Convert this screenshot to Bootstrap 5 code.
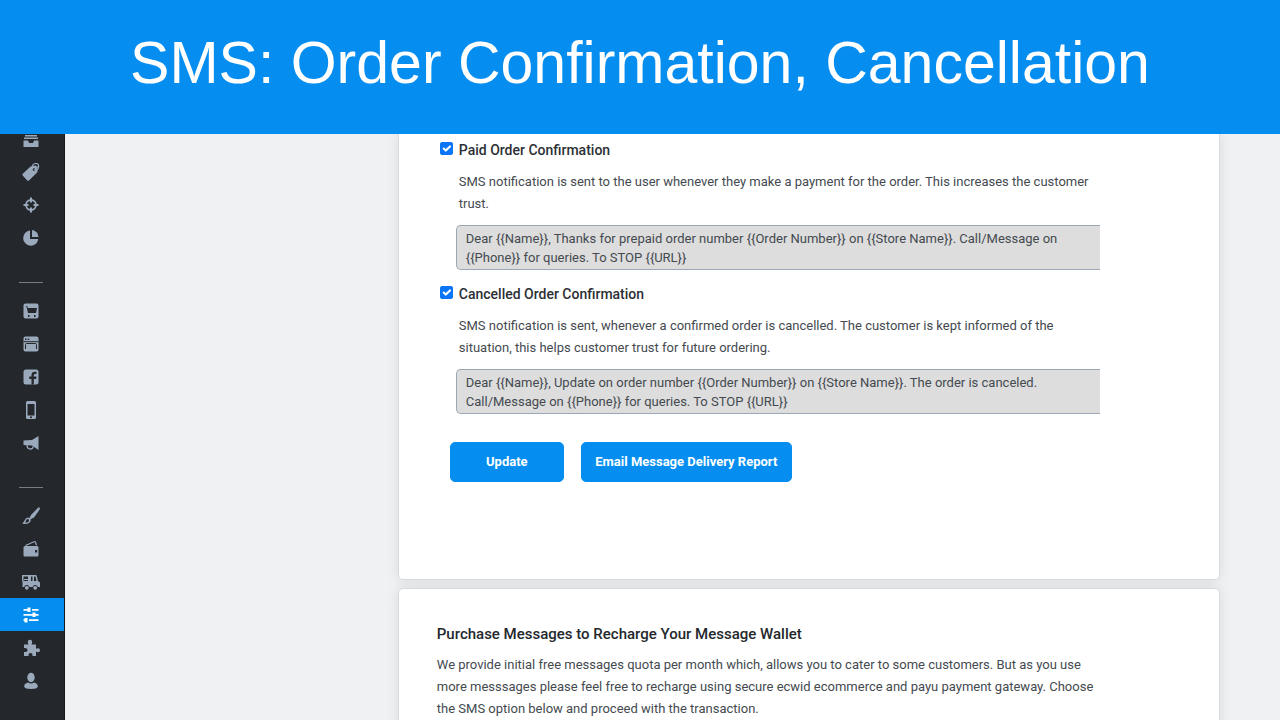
<!DOCTYPE html>
<html lang="en">
<head>
<meta charset="utf-8">
<meta name="viewport" content="width=device-width, initial-scale=1">
<title>SMS: Order Confirmation, Cancellation</title>
<link href="https://cdn.jsdelivr.net/npm/bootstrap@5.3.0/dist/css/bootstrap.min.css" rel="stylesheet">
<style>
  :root { --brand: #058ef0; }
  body { font-family: Roboto, "Open Sans", sans-serif; font-size: 13px; line-height: 22px; color: #444a50; background: #f0f1f3; }
  .banner { background: var(--brand); height: 134px; padding-bottom: 8px; }
  .banner h1 { font-family: "Liberation Sans", sans-serif; font-size: 59px; line-height: 64px; }
  .rail { width: 65px; background: #24282d; border-right: 1px solid #16191c; }
  .rail a { height: 33px; color: #9aa9bb; padding-right: 2px; }
  .rail a.cut { height: 21px; overflow: hidden; }
  .rail a.active { background: var(--brand); color: #fff; }
  .rail svg { width: 18px; height: 18px; fill: currentColor; flex: none; }
  .rail hr { width: 24px; margin: 28px 21px 11px 19px; border-top: 1px solid #8b9299; opacity: .8; }
  .content { padding: 0 60px 0 26%; }
  .panel { background: #fff; border: 1px solid #d9dcdf; border-radius: 5px; box-shadow: 0 0 14px rgba(0,0,0,.09); padding: 0 119px 40px 38px; }
  .panel-first { border-top: 0; border-radius: 0 0 5px 5px; padding-top: 5px; padding-bottom: 97px; margin-bottom: 8px; }
  .option { padding-left: 22px; }
  .option + .option { margin-top: 13px; }
  .option .form-check-input { width: 13px; height: 13px; margin: 3px 0 0 -19px; border-radius: 2px; }
  .option .form-check-input:checked { background-color: #0a75f5; border-color: #0a75f5; background-size: 14px; }
  .option label { font-size: 14px; font-weight: 500; color: #2b3035; display: block; }
  .option p { margin: 10px 0; }
  .sms { font: inherit; line-height: 19px; color: inherit; width: calc(100% + 3px); height: 45px; padding: 3px 9px; margin-left: -3px; background: #ddd; border: 1px solid #9aa8b5; border-right: 0; border-radius: 5px 0 0 5px; resize: none; overflow: hidden; display: block; outline: 0; }
  .actions { margin: 28px 0 0 13px; gap: 17px; }
  .action { --bs-btn-bg: var(--brand); --bs-btn-color: #fff; --bs-btn-hover-bg: #047fd6; --bs-btn-hover-color: #fff; --bs-btn-border-color: var(--brand); --bs-btn-border-radius: 5px; --bs-btn-font-size: 13px; --bs-btn-font-weight: 700; height: 40px; white-space: nowrap; }
  .update { width: 114px; }
  .report { width: 211px; }
  .panel h2 { font-size: 15px; line-height: 22px; font-weight: 500; color: #24282d; margin: 34px 0 9px; }
</style>
</head>
<body class="vh-100 d-flex flex-column overflow-hidden">
<header class="banner d-flex align-items-center justify-content-center flex-shrink-0">
  <h1 class="m-0 text-white fw-normal text-nowrap">SMS: Order Confirmation, Cancellation</h1>
</header>
<div class="d-flex flex-grow-1 overflow-hidden">
  <nav class="rail flex-shrink-0 d-flex flex-column" aria-label="Main">
    <a href="#" class="cut d-flex justify-content-center" aria-label="Orders"><svg viewBox="0 0 18 18"><path d="M3 1h12v1.500H3zM2 3.500h14V5H2zM1.500 6.500H6l1 2.500h4l1-2.500h4.500v6.500h-15z"/></svg></a>
    <a href="#" class="d-flex align-items-center justify-content-center" aria-label="Catalog"><svg viewBox="0 0 18 18"><path fill-rule="evenodd" d="M8.500 3.500 14 2.500 15.500 9 7 17.500Q6 18.300 5 17.300L.7 12.500Q0 11.500.8 10.700ZM12 5.200a1.400 1.400 0 1 0 .1 0z"/><path d="M10 6q0-5.500 4-5.500c4 0 3 5 .5 7.500M12 7q3.500-1 3-4" fill="none" stroke="currentColor" stroke-width="1.200"/></svg></a>
    <a href="#" class="d-flex align-items-center justify-content-center" aria-label="Marketing"><svg viewBox="0 0 18 18"><g fill="none" stroke="currentColor"><circle cx="9" cy="9" r="5" stroke-width="1.800"/><path d="M9 1.500v5M9 11.500v5M1.500 9h5M11.500 9h5" stroke-width="2"/></g></svg></a>
    <a href="#" class="d-flex align-items-center justify-content-center" aria-label="Reports"><svg viewBox="0 0 18 18"><path d="M8 1.500V10h8.300A7.600 7.600 0 1 1 8 1.500z"/><path d="M10 1a7.300 7.300 0 0 1 6.500 7H10z"/></svg></a>
    <hr>
    <a href="#" class="d-flex align-items-center justify-content-center" aria-label="Store"><svg viewBox="0 0 18 18"><rect x="1.500" y="1.500" width="15" height="15" rx="2"/><path d="M3 4h2l1 2h9l-1 5H6L4.500 4.500M6 13h1.500v2H6zM12 13h1.500v2H12z" fill="#24282d"/></svg></a>
    <a href="#" class="d-flex align-items-center justify-content-center" aria-label="Website"><svg viewBox="0 0 18 18"><rect x="1.500" y="1.500" width="15" height="15" rx="2"/><path d="M3 3.500h1.500V5H3zM5.700 3.500h1.500V5H5.700z" fill="#24282d"/><path d="M1.500 6.700h15M3.500 14V9.500Q3.500 8.500 4.500 8.500h9q1 0 1 1V14" fill="none" stroke="#24282d" stroke-width="1"/></svg></a>
    <a href="#" class="d-flex align-items-center justify-content-center" aria-label="Facebook"><svg viewBox="0 0 18 18"><rect x="1.500" y="1.500" width="15" height="15" rx="2.500"/><path d="M9.500 16.500V11H7.300V8.500h2.200V7q0-3.200 3.300-3.200h1.700v2.300H13q-1.200 0-1.200 1.200v1.200h2.700l-.4 2.500h-2.300v5.500z" fill="#24282d"/></svg></a>
    <a href="#" class="d-flex align-items-center justify-content-center" aria-label="Mobile"><svg viewBox="0 0 18 18"><path fill-rule="evenodd" d="M5.500 0h7Q14 0 14 1.500v15q0 1.500-1.500 1.500h-7Q4 18 4 16.500v-15Q4 0 5.500 0zM5.500 3v11.500h7V3zM8 15.500V17h2v-1.500z"/></svg></a>
    <a href="#" class="d-flex align-items-center justify-content-center" aria-label="Campaigns"><svg viewBox="0 0 18 18"><path d="M1.500 6.500 10 6l6.500-4v14L10 11.500l-8.500-.5z"/><path d="M5 11q0 4 3.500 4Q11 15 11 12.500" fill="none" stroke="currentColor" stroke-width="1.300"/></svg></a>
    <hr>
    <a href="#" class="d-flex align-items-center justify-content-center" aria-label="Design"><svg viewBox="0 0 18 18"><path d="M17.700.7q.5 1-.2 2L12 10.500 8 12.500l-.8-.7L9 8l7-7.200q1-.8 1.700-.1z"/><path fill-rule="evenodd" d="M6 10.500Q9 11 8.700 13.500 8 17.500.8 16.800q-.8-.5 0-1.100Q2.200 15 2.800 13 3.800 10.500 6 10.500zM5.500 12Q4 12.300 3.800 14.500L3 15.700q3.500 0 4.200-2.200.2-1.500-1.700-1.500z"/></svg></a>
    <a href="#" class="d-flex align-items-center justify-content-center" aria-label="Payment"><svg viewBox="0 0 18 18"><path fill-rule="evenodd" d="M3 6h12q1.500 0 1.500 1.500V15q0 1.500-1.500 1.500H3Q1.500 16.500 1.500 15V7.500Q1.500 6 3 6zm10 4v2.500h2.200V10z"/><path d="M3.500 5.500 12 1.800q1-.5 1.500.5l1 3" fill="none" stroke="currentColor" stroke-width="1.200"/></svg></a>
    <a href="#" class="d-flex align-items-center justify-content-center" aria-label="Shipping"><svg viewBox="0 0 18 18"><path fill-rule="evenodd" d="M0 2h13.500q1 0 1.300 1L16 8l2 1.500V14h-2.200a2.600 2.600 0 0 0-5.100 0H7.300a2.600 2.600 0 0 0-5.100 0H.5V8H0zM1.500 3.500V8H6V3.500zM9 3.500V8h1.500V3.500zm3 0V8h2.500l-1-4.500z"/><path d="M2 6h4v1H2z"/><circle cx="4.800" cy="14.800" r="1.900"/><circle cx="13.200" cy="14.800" r="1.900"/></svg></a>
    <a href="#" class="active d-flex align-items-center justify-content-center" aria-label="Settings" aria-current="page"><svg viewBox="0 0 18 18"><path d="M1.500 3h4V1.500h3V3v1.800V6h-3V4.800h-4zM10 3h6.500v1.800H10zM1.500 8h9V6.500h3V8h3v1.800h-3V11h-3V9.800h-9zM1.500 13.300h1V12h3v4.500h-3v-1.400h-1zM7 13.300h9.500v1.800H7z"/></svg></a>
    <a href="#" class="d-flex align-items-center justify-content-center" aria-label="Apps"><svg viewBox="0 0 18 18"><path d="M2 5.500h4.600Q5.800 4.500 5.800 3a2.200 2.200 0 0 1 4.400 0q0 1.500-.8 2.500H14v4.300q1-.6 2-.6a2 2 0 0 1 0 4q-1 0-2-.6V17h-3.500q.3-3-2-3t-2 3H2v-4q3.500.3 3.500-2T2 9z"/></svg></a>
    <a href="#" class="d-flex align-items-center justify-content-center" aria-label="Profile"><svg viewBox="0 0 18 18"><ellipse cx="9" cy="5.500" rx="3.700" ry="4.700"/><path d="M6 10.500q3 2 6 0 4 1 3.800 4Q15.500 17 9 17t-6.800-2.500q-.2-3 3.800-4z"/></svg></a>
  </nav>
  <main class="content flex-grow-1">
    <section class="panel panel-first">
      <div class="option">
        <input class="form-check-input float-start" type="checkbox" id="paid" checked>
        <label for="paid">Paid Order Confirmation</label>
        <p>SMS notification is sent to the user whenever they make a payment for the order. This increases the customer trust.</p>
        <textarea class="sms" readonly rows="2" aria-label="Paid order message">Dear {{Name}}, Thanks for prepaid order number {{Order Number}} on {{Store Name}}. Call/Message on {{Phone}} for queries. To STOP {{URL}}</textarea>
      </div>
      <div class="option">
        <input class="form-check-input float-start" type="checkbox" id="cancelled" checked>
        <label for="cancelled">Cancelled Order Confirmation</label>
        <p>SMS notification is sent, whenever a confirmed order is cancelled. The customer is kept informed of the situation, this helps customer trust for future ordering.</p>
        <textarea class="sms" readonly rows="2" aria-label="Cancelled order message">Dear {{Name}}, Update on order number {{Order Number}} on {{Store Name}}. The order is canceled. Call/Message on {{Phone}} for queries. To STOP {{URL}}</textarea>
      </div>
      <div class="actions d-flex">
        <button type="button" class="btn action update px-0">Update</button>
        <button type="button" class="btn action report px-0">Email Message Delivery Report</button>
      </div>
    </section>
    <section class="panel">
      <h2>Purchase Messages to Recharge Your Message Wallet</h2>
      <p class="m-0">We provide initial free messages quota per month which, allows you to cater to some customers. But as you use more messsages please feel free to recharge using secure ecwid ecommerce and payu payment gateway. Choose the SMS option below and proceed with the transaction.</p>
    </section>
  </main>
</div>
<script src="https://cdn.jsdelivr.net/npm/bootstrap@5.3.0/dist/js/bootstrap.bundle.min.js"></script>
</body>
</html>
